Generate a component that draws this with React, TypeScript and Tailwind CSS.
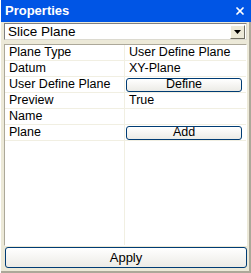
import { X } from 'lucide-react';

interface PropRow {
  name: string;
  value?: string;
  button?: string;
}

const rows: PropRow[] = [
  { name: 'Plane Type', value: 'User Define Plane' },
  { name: 'Datum', value: 'XY-Plane' },
  { name: 'User Define Plane', button: 'Define' },
  { name: 'Preview', value: 'True' },
  { name: 'Name', value: '' },
  { name: 'Plane', button: 'Add' },
];

function XpButton({ label, className }: { label: string; className?: string }) {
  return (
    <div
      className={`flex items-center justify-center rounded-[3px] border border-[#003c74] bg-gradient-to-b from-white to-[#ecebe6] text-black ${className ?? ''}`}
    >
      {label}
    </div>
  );
}

export default function App() {
  return (
    <div
      className="flex h-[273px] w-[251px] flex-col border-l border-l-white bg-[#ece9d8] text-black"
      style={{ fontFamily: '"Liberation Sans", Arial, sans-serif' }}
    >
      {/* Title bar */}
      <div className="flex h-[22px] shrink-0 items-center justify-between bg-[#0055e5] pl-[4px] pr-[5px]">
        <span className="text-[13px] font-bold text-white">Properties</span>
        <X size={12} strokeWidth={3.5} className="text-white" />
      </div>

      <div className="flex flex-1 flex-col border-r-[2px] border-b-[2px] border-r-[#aca899] border-b-[#aca899] pl-[3px] pr-[2px]">
        {/* Combo box */}
        <div className="mt-[1px] flex h-[17px] items-center border border-t-[#808080] border-l-[#808080] border-r-[#dcdad0] border-b-[#dcdad0] bg-white">
          <span className="flex-1 pl-[3px] text-[13.5px] leading-none">Slice Plane</span>
          <div className="mr-[1px] flex h-[14px] w-[15px] items-center justify-center border border-t-white border-l-white border-r-[#716f64] border-b-[#716f64] bg-[#ece9d8]">
            <svg width="7" height="4" viewBox="0 0 7 4">
              <path d="M0 0h7L3.5 4z" fill="#000" />
            </svg>
          </div>
        </div>

        {/* Property grid */}
        <div className="mt-[4px] flex flex-1 border border-t-[#aca899] border-l-[#aca899] border-r-white border-b-white bg-white">
          <div className="flex flex-1 flex-col">
            {rows.map((row) => (
              <div key={row.name} className="flex h-4 border-b border-b-[#f1efe2] text-[12.5px] leading-none">
                <div className="flex w-[120px] items-center border-r border-r-[#f1efe2] pl-[4px]">
                  {row.name}
                </div>
                <div className="flex flex-1 items-center pl-[4px] pr-[1px]">
                  {row.button ? (
                    <XpButton label={row.button} className="h-[14px] w-full -ml-[3px]" />
                  ) : (
                    row.value
                  )}
                </div>
              </div>
            ))}
            <div className="flex flex-1">
              <div className="w-[120px] border-r border-r-[#f1efe2]" />
            </div>
          </div>
        </div>

        {/* Apply */}
        <XpButton label="Apply" className="mt-[1px] mb-[3px] ml-[1px] h-[21px] text-[13px]" />
      </div>
    </div>
  );
}
